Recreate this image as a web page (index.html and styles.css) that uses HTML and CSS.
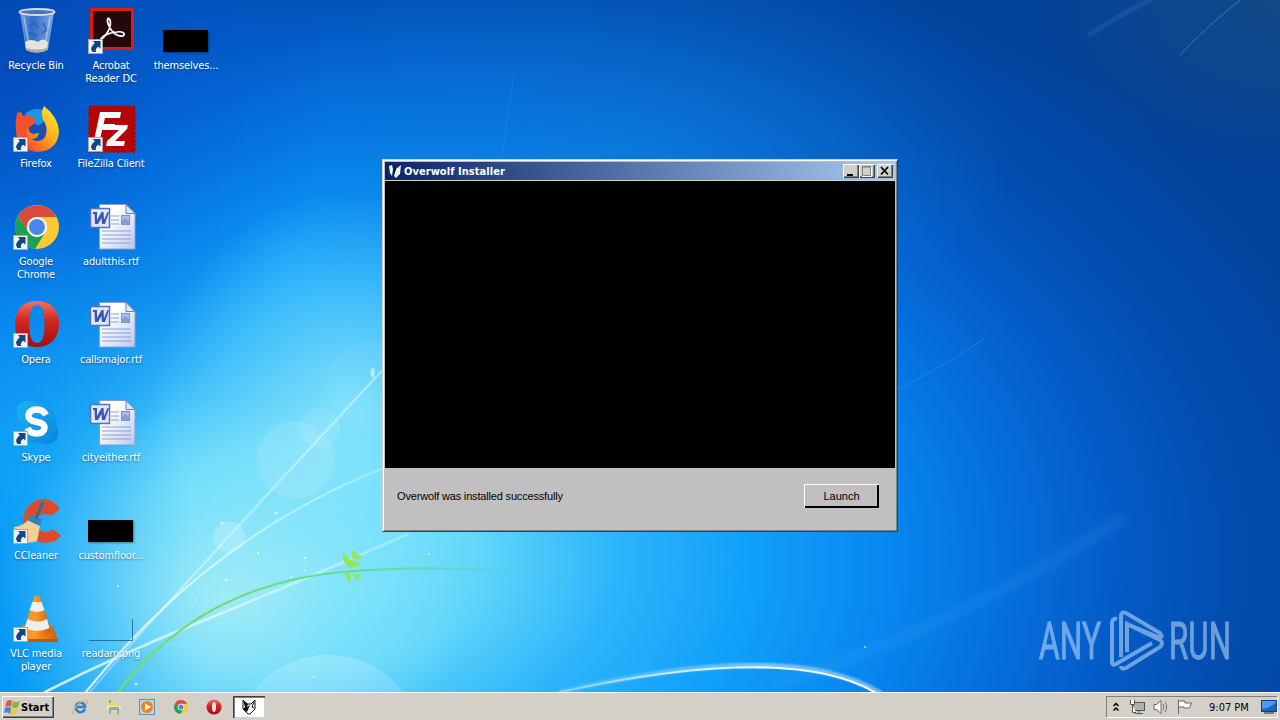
FILE: index.html
```html
<!DOCTYPE html>
<html lang="en">
<head>
  <meta charset="UTF-8">
  <title>Overwolf Installer</title>
  <link rel="stylesheet" href="styles.css">
</head>
<body>
  <div class="desktop">
    <svg class="wallpaper" viewBox="0 0 1280 692">
      <defs>
        <linearGradient id="fade" x1="0" x2="1"><stop offset="0" stop-color="#7bdc58"/><stop offset=".5" stop-color="#62dc9a"/><stop offset="1" stop-color="#50c8e8" stop-opacity="0"/></linearGradient>
        <linearGradient id="bubble" x1="0" y1="0" x2="0" y2="1"><stop offset="0" stop-color="#fff" stop-opacity=".2"/><stop offset=".6" stop-color="#fff" stop-opacity="0"/></linearGradient>
        <linearGradient id="beam" x1="0" x2="1"><stop offset="0" stop-color="#fff" stop-opacity=".8"/><stop offset="1" stop-color="#fff" stop-opacity=".25"/></linearGradient>
        <linearGradient id="arc" x1="0" x2="1"><stop offset="0" stop-color="#fff" stop-opacity=".3"/><stop offset=".65" stop-color="#fff"/><stop offset="1" stop-color="#fff"/></linearGradient>
        <filter id="soft"><feGaussianBlur stdDeviation="1"/></filter>
        <filter id="softer" x="-20%" y="-20%" width="140%" height="140%"><feGaussianBlur stdDeviation="5"/></filter>
      </defs>
      <circle cx="328" cy="750" r="95" fill="url(#bubble)"/>
      <circle cx="295" cy="460" r="39" fill="#fff" opacity=".11"/>
      <circle cx="320" cy="428" r="20" fill="#fff" opacity=".1"/>
      <circle cx="229" cy="537" r="16" fill="#fff" opacity=".2"/>
      <circle cx="370" cy="385" r="44" fill="#fff" opacity=".04"/>
      <g fill="none" stroke-linecap="round">
        <path d="M90 692Q190 575 382 371" stroke="#fff" stroke-opacity=".33" stroke-width="2"/>
        <path d="M84 692Q210 560 382 370" stroke="#fff" stroke-opacity=".2" stroke-width="1.5"/>
        <path d="M86 692Q212 535 384 468" stroke="url(#beam)" stroke-width="2"/>
        <path d="M45 692Q120 654 200 622T408 534" stroke="url(#beam)" stroke-width="2.6"/>
        <path d="M118 692Q200 585 342 572Q460 562 600 580" stroke="url(#fade)" stroke-width="2.2"/>
        <path d="M560 692Q790 638 880 693" stroke="url(#arc)" stroke-width="5" opacity=".45" filter="url(#soft)"/>
        <path d="M560 692Q790 642 876 693" stroke="url(#arc)" stroke-width="2"/>
        <path d="M780 683Q960 625 1120 520" stroke="#5ab8ff" stroke-opacity=".16" stroke-width="9" filter="url(#softer)"/>
        <path d="M897 390Q950 363 985 338" stroke="#65baff" stroke-opacity=".25"/>
        <path d="M502 155Q508 110 515 70" stroke="#7fcaff" stroke-opacity=".12"/>
        <path d="M1180 55Q1205 28 1240 0" stroke="#65baff" stroke-opacity=".25" stroke-width="1.500"/>
        <path d="M1090 34Q1120 15 1150 0" stroke="#65baff" stroke-opacity=".13" stroke-width="5" filter="url(#soft)"/>
      </g>
      <path d="M343 551Q342 564 350 568Q360 567 360 562Q352 564 343 551ZM351 548L352 558Q356 561 363 556Q356 556 351 548ZM344 571Q346 580 351 584L350 574ZM352 573L358 582L360 575Z" fill="#93e856"/>
      <path d="M371 369q3-3 4 2l-1 7q-5-2-3-9" fill="#fff" opacity=".5"/>
      <g fill="#fff" opacity=".65"><circle cx="276" cy="513" r="1.5"/><circle cx="222" cy="523" r="1.5"/><circle cx="258" cy="553" r="1.2"/><circle cx="226" cy="580" r="1.5"/><circle cx="305" cy="558" r="1.2"/><circle cx="305" cy="570" r="1"/><circle cx="196" cy="600" r="1"/><circle cx="291" cy="577" r="1"/><circle cx="136" cy="684" r="1.5"/><circle cx="314" cy="677" r="1"/><circle cx="429" cy="554" r="1"/><circle cx="118" cy="586" r="1"/><circle cx="865" cy="647" r="1"/></g>
    </svg>

    <!-- shared shapes -->
    <svg class="sprites">
      <defs>
        <linearGradient id="red" x1="0" y1="0" x2="0" y2="1"><stop offset="0" stop-color="#f07468"/><stop offset=".4" stop-color="#d32a20"/><stop offset="1" stop-color="#a30d0a"/></linearGradient>
        <linearGradient id="fire" x1="1" y1="0" x2=".1" y2="1"><stop offset="0" stop-color="#fff33a"/><stop offset=".45" stop-color="#ffb21e"/><stop offset=".75" stop-color="#ff6a22"/><stop offset="1" stop-color="#e8205a"/></linearGradient>
        <linearGradient id="page" x1="0" y1="0" x2="1" y2="1"><stop offset=".3" stop-color="#fff"/><stop offset="1" stop-color="#b9c8f2"/></linearGradient>
        <linearGradient id="cone" x1="0" x2="1"><stop offset="0" stop-color="#f08a1c"/><stop offset=".4" stop-color="#ff9a2c"/><stop offset="1" stop-color="#d35c04"/></linearGradient>
        <linearGradient id="glass" x1="0" x2="1"><stop offset="0" stop-color="#9db9e6" stop-opacity=".8"/><stop offset=".35" stop-color="#5f8fd8" stop-opacity=".5"/><stop offset="1" stop-color="#a9c3ee" stop-opacity=".8"/></linearGradient>
        <linearGradient id="sky" x1="0" y1="0" x2="1" y2="1"><stop offset="0" stop-color="#18b4f4"/><stop offset="1" stop-color="#0a84dc"/></linearGradient>
      </defs>
      <symbol id="shortcut" viewBox="0 0 15 15">
        <rect x=".5" y=".5" width="14" height="14" fill="#f2f2f2" stroke="#a8a8a8"/>
        <path d="M5 2H12.500V9.500L10.300 7.800Q7 9.500 8 13H4.500Q1 8.500 6.800 4.200Z" fill="#164585"/>
      </symbol>
      <symbol id="chrome" viewBox="0 0 44 44">
        <circle cx="22" cy="22" r="22" fill="#fbc934"/>
        <path d="M3 11A22 22 0 0 1 41.500 12H22A10 10 0 0 0 13 27Z" fill="#dc4a3c"/>
        <path d="M3 11A22 22 0 0 0 20 44L30.500 27A10 10 0 0 1 13.300 27Z" fill="#1d9f58"/>
        <circle cx="22" cy="22" r="10" fill="#fff"/><circle cx="22" cy="22" r="8" fill="#4a86ee"/>
      </symbol>
      <symbol id="opera" viewBox="0 0 44 46">
        <path fill-rule="evenodd" d="M22 0C36 0 44 9 44 23S35 46 22 46S0 37 0 23S8 0 22 0ZM22 4C16 4 14.500 12 14.500 23S16 42 22 42S29.500 34 29.500 23S28 4 22 4Z" fill="url(#red)"/>
      </symbol>
      <symbol id="word" viewBox="0 0 48 48">
        <path d="M11.500 1.500H38L47 10.500V46H11.500Z" fill="url(#page)" stroke="#8a9cc8"/>
        <path d="M38 1.500V10.500H47Z" fill="#dce8fa" stroke="#6b84b8"/>
        <path d="M23 13H31M23 17H31M23 21H31M14 28H43M14 32H43M14 36H43M14 40H43" stroke="#8ca0d2"/>
        <rect x="33.500" y="12.500" width="8" height="9" fill="#a8c0e8" stroke="#7d94c8"/><path d="M34 18l3-3 4 3v3h-7z" fill="#7ea0d6"/>
        <rect x="2.500" y="5.500" width="19" height="19" fill="#dfe7fa" stroke="#5570bc" stroke-width="1.500"/>
        <path d="M5 9H9V17L13.500 9H15.500L16 17L19.500 9H21L17 21H14L13.500 15L10 21H7L6.500 11H5Z" fill="#3c56b0"/>
      </symbol>
    </svg>

    <div class="icons">
      <div class="icon">
        <svg viewBox="0 0 48 48">
          <path d="M7 5L13 43Q24 47 35 43L41 5Z" fill="url(#glass)"/>
          <path d="M12 35L13 43Q24 48 34 43L35 35Q29 30 25 35Q18 31 12 35Z" fill="#e6e3dd"/>
          <path d="M13 43Q24 48 34 43L34 41Q24 44 13 41Z" fill="#b4aba0"/>
          <ellipse cx="24" cy="5" rx="17.500" ry="3" fill="#4a73ba" stroke="#d2dae6" stroke-width="1.800"/>
          <path d="M16 19L22 16L25 21M30 16L34 23L29 26M16 26L24 29" fill="none" stroke="#2a61b4" stroke-width="2.500" opacity=".65"/>
          <path d="M11 10L16 38M37 10L32 38" stroke="#d9e6fa" stroke-width="1.500" opacity=".5"/>
        </svg>
        <span>Recycle Bin</span>
      </div>
      <div class="icon">
        <svg viewBox="0 0 48 48">
          <rect x="2" y="1" width="44" height="42" fill="#e21b12"/><rect x="5" y="4" width="38" height="36" fill="#25080e"/>
          <path d="M11 34C19 29 24 19 22 13C20 9 18 13 21 19C24 26 30 30 35 29C38 27 35 24 29 25C20 26 15 28 11 34Z" fill="none" stroke="#fff" stroke-width="1.700"/>
        </svg>
        <svg class="arrow"><use href="#shortcut"/></svg>
        <span>Acrobat<br>Reader DC</span>
      </div>
      <div class="icon">
        <div class="thumb"></div>
        <span>themselves...</span>
      </div>

      <div class="icon">
        <svg viewBox="0 0 48 48">
          <circle cx="23" cy="21" r="17" fill="#1a4fb8"/><path d="M12 9Q21 1 31 6L34 14L25 21Z" fill="#1898e4"/>
          <path d="M31 1Q45 12 46 26Q45 46 24 47Q4 45 3 25Q2 14 8 7L10 12Q15 9 20 13L22 18L16 22Q14 27 20 29L26 28Q25 34 18 34Q27 39 32 32Q35 25 32 18Q26 9 31 1Z" fill="url(#fire)"/>
          <path d="M5 6L10 11Q15 9 21 12L22 18L16 22Q11 27 17 34Q8 34 3 25Q2 14 5 6Z" fill="#f2502e"/>
        </svg>
        <svg class="arrow"><use href="#shortcut"/></svg>
        <span>Firefox</span>
      </div>
      <div class="icon">
        <svg viewBox="0 0 48 48">
          <rect x="1" y="1" width="46" height="46" fill="#b40404" stroke="#9c1010" stroke-width="2" stroke-dasharray="2 2"/>
          <path d="M12 7H33L32 13H17L15.500 19H27L26 25H14L11 40H5Z" fill="#fff"/>
          <path d="M25 20H40L39 24L27 36H37L36 41H18L19 36L31 25H24Z" fill="#fff"/>
        </svg>
        <svg class="arrow"><use href="#shortcut"/></svg>
        <span>FileZilla Client</span>
      </div>
      <div class="icon"></div>

      <div class="icon">
        <svg viewBox="0 0 48 48"><use href="#chrome" x="2" y="2" width="44" height="44"/></svg>
        <svg class="arrow"><use href="#shortcut"/></svg>
        <span>Google<br>Chrome</span>
      </div>
      <div class="icon">
        <svg viewBox="0 0 48 48"><use href="#word" width="48" height="48"/></svg>
        <span>adultthis.rtf</span>
      </div>
      <div class="icon"></div>

      <div class="icon">
        <svg viewBox="0 0 48 48"><use href="#opera" x="2" y="0" width="44" height="46"/></svg>
        <svg class="arrow"><use href="#shortcut"/></svg>
        <span>Opera</span>
      </div>
      <div class="icon">
        <svg viewBox="0 0 48 48"><use href="#word" width="48" height="48"/></svg>
        <span>callsmajor.rtf</span>
      </div>
      <div class="icon"></div>

      <div class="icon">
        <svg viewBox="0 0 48 48">
          <path d="M15 2Q20 2 23 4Q43 4 43 25Q48 34 43 41Q37 47 28 44Q10 46 5 30Q4 24 5 19Q0 4 15 2Z" fill="url(#sky)"/>
          <path d="M33 16Q30 10.500 24 10.500Q15.500 11 15.500 17Q15.500 21.500 24 23Q32 24.500 31.500 29Q30.500 34.500 23.500 34.500Q17 34.500 14.500 29" fill="none" stroke="#fff" stroke-width="6.500"/>
        </svg>
        <svg class="arrow"><use href="#shortcut"/></svg>
        <span>Skype</span>
      </div>
      <div class="icon">
        <svg viewBox="0 0 48 48"><use href="#word" width="48" height="48"/></svg>
        <span>cityeither.rtf</span>
      </div>
      <div class="icon"></div>

      <div class="icon">
        <svg viewBox="0 0 48 48">
          <path d="M47 12L38 19Q32 15 26 19Q20 27 28 34Q35 37 40 32L48 39Q40 48 27 45Q11 40 10 25Q11 6 28 2Q40 1 47 12Z" fill="#e04a2c"/>
          <path d="M15 23L27 29L24 44Q12 48 4 42L1 30Q10 29 15 23Z" fill="#f6cf98"/>
          <path d="M17 18L29 22L27 29L14 23Z" fill="#2c86bc"/>
          <path d="M30 5L23 22" stroke="#1c74a8" stroke-width="3"/>
        </svg>
        <svg class="arrow"><use href="#shortcut"/></svg>
        <span>CCleaner</span>
      </div>
      <div class="icon">
        <div class="thumb"></div>
        <span>customfloor...</span>
      </div>
      <div class="icon"></div>

      <div class="icon">
        <svg viewBox="0 0 48 48">
          <path d="M9 31H40L45 46H4Z" fill="url(#cone)"/><path d="M4 44H45V47H4Z" fill="#c65402"/>
          <path d="M21 2Q24 -1 27 2L38 35Q36 42 24 42T11 35Z" fill="url(#cone)"/>
          <path d="M19.500 7H28.500L31.500 15Q24 19 16.500 15ZM14.500 24Q24 29 34 24L36.500 33Q24 39 11.500 33Z" fill="#eceef0"/>
        </svg>
        <svg class="arrow"><use href="#shortcut"/></svg>
        <span>VLC media<br>player</span>
      </div>
      <div class="icon">
        <div class="thumb empty"></div>
        <span>readam.png</span>
      </div>
    </div>

    <div class="window">
      <div class="titlebar">
        <svg class="wolf" viewBox="0 0 14 14">
          <path d="M1 2L4 1L5 5L4 12L2 9ZM13 1L8 5L6 12L8 14L12 10Z" fill="#f4f4f4"/><path d="M5 4L6 1L6 9L5 13L8 5Z" fill="#111"/>
        </svg>
        <span class="title">Overwolf Installer</span>
        <div class="btn"><svg viewBox="0 0 16 14"><path d="M4 10H10V12H4Z"/></svg></div>
        <div class="btn"><svg viewBox="0 0 16 14"><path d="M3.500 3H11.500V11.500H3.500Z" fill="none" stroke="#808080"/><path d="M3 2.500H12" stroke="#808080"/><path d="M3 12.500H12.500V3" fill="none" stroke="#fff"/></svg></div>
        <div class="btn close"><svg viewBox="0 0 16 14"><path d="M4 3L11 10.500M11 3L4 10.500" stroke="#000" stroke-width="1.800"/></svg></div>
      </div>
      <div class="screen"></div>
      <div class="footer">
        <span>Overwolf was installed successfully</span>
        <button>Launch</button>
      </div>
    </div>

    <svg class="watermark" viewBox="0 0 240 80">
      <text x="0" y="49" textLength="62" lengthAdjust="spacingAndGlyphs">ANY</text>
      <text x="130" y="49" textLength="62" lengthAdjust="spacingAndGlyphs">RUN</text>
      <path d="M78 9Q73 8 73 13V52Q73 56 77 54L113 33M82 47V6Q82 1 87 3L121 23Q125 28 119 27L88 14M82 56Q82 60 87 58L121 37Q125 33 121 30L88 14V42"/>
    </svg>
  </div>

  <div class="taskbar">
    <div class="start">
      <svg viewBox="0 0 16 16">
        <path d="M3 2Q6 0 8 2L7 8Q4 6 1 8Z" fill="#e8582c"/><path d="M9 2Q12 4 16 2L14 8Q10 10 8 8Z" fill="#7cbc3c"/>
        <path d="M1 9Q4 7 7 9L6 15Q3 12 0 14Z" fill="#3f86dc"/><path d="M8 9Q10 11 14 9L12 14Q9 17 6 15Z" fill="#f8c42c"/>
      </svg>
      <span>Start</span>
    </div>
    <div class="quick">
      <svg viewBox="0 0 16 16">
        <path d="M13 10Q11 14 7 13Q3 11 4 7Q6 3 10 4Q13 5 13 8H5" fill="none" stroke="#2385da" stroke-width="2.600"/>
        <path d="M3 15Q-1 15 3 9Q8 2 14 1Q17 2 14 6" fill="none" stroke="#e6b83c" stroke-width="1.200"/>
      </svg>
      <svg viewBox="0 0 16 16">
        <path d="M1 2H6L7 4H14V14H1Z" fill="#f0d478"/><path d="M3 1H5V4H3Z" fill="#74bc54"/><path d="M1 7H15V10H1Z" fill="#fae9a0"/>
        <path d="M3 15V9Q3 8 5 8H12Q13 8 13 9V15H11V11H5V15Z" fill="#62b6e8"/>
      </svg>
      <svg viewBox="0 0 16 16">
        <rect x=".5" y=".5" width="15" height="15" fill="#b4d6f4" stroke="#5c92cc"/><circle cx="8" cy="8" r="6" fill="#f48414"/><path d="M6 4.500L12 8L6 11.500Z" fill="#fff"/>
      </svg>
      <svg viewBox="0 0 16 16"><use href="#chrome" x="1" y="1" width="14" height="14"/></svg>
      <svg viewBox="0 0 16 16"><circle cx="8" cy="8" r="7.500" fill="url(#red)"/><ellipse cx="8" cy="8" rx="2" ry="5" fill="#f4e8e8"/></svg>
    </div>
    <div class="task">
      <svg viewBox="0 0 16 16">
        <path d="M2 1L6 5H10L14 1L14 10L9 15H7L2 10Z" fill="#fff" stroke="#111"/><path d="M2 1L7 5L6 8L9 6L6 13L2 10L4 8Z" fill="#111"/><path d="M13 3L11 8L13 9" fill="none" stroke="#111"/>
      </svg>
    </div>
    <div class="tray">
      <svg class="chevron" viewBox="0 0 8 10"><path d="M1.500 4L4 1.500L6.500 4M1.500 8.500L4 6L6.500 8.500" fill="none" stroke="#000" stroke-width="1.500"/></svg>
      <svg class="net" viewBox="0 0 16 16"><rect x="4.500" y="3.500" width="11" height="8" fill="#b0b0b0" stroke="#555"/><path d="M10 12V14M6 14.500H14" stroke="#555"/><path d="M1.500 1V5.500H5.500V1M3.500 5.500V13.500H7" fill="#fff" stroke="#555"/></svg>
      <svg class="sound" viewBox="0 0 16 16"><path d="M1 5.500H3.500L8 1.500V14.500L3.500 10.500H1Z" fill="#fff" stroke="#666"/><path d="M10 5Q12 8 10 11M12 3Q15.500 8 12 13" fill="none" stroke="#777"/></svg>
      <svg class="flag" viewBox="0 0 16 16"><path d="M1.500 1V15M2 2H8V4H14.500L12.500 9H7V8H2" fill="#fff" stroke="#666"/></svg>
      <span>9:07 PM</span>
      <svg class="show" viewBox="0 0 16 14"><rect x=".5" y=".5" width="15" height="11" fill="#1c62c8" stroke="#123f88"/><path d="M1 9Q8 9 15 2V1H1Z" fill="#4c9cea"/><path d="M3 13H13" stroke="#222"/></svg>
    </div>
  </div>
</body>
</html>
```
FILE: styles.css
```css
body {
  margin: 0;
  width: 1280px;
  height: 720px;
  overflow: hidden;
  display: flex;
  flex-direction: column;
  font-family: "DejaVu Sans Condensed", "DejaVu Sans", sans-serif;
  font-size: 11px;
}
.desktop {
  position: relative;
  height: 692px;
  background:
    radial-gradient(ellipse 240px 200px at 230px 600px, rgba(180,240,246,0.75) 0%, rgba(160,238,250,0.4) 45%, transparent 100%),
    radial-gradient(ellipse 200px 420px at 0px 640px, rgba(0,150,246,1) 0%, rgba(0,150,246,0.7) 35%, transparent 100%),
    radial-gradient(ellipse 200px 220px at 350px 410px, rgba(150,236,252,0.7) 0%, rgba(130,228,250,0.4) 50%, transparent 100%),
    radial-gradient(ellipse 330px 420px at 0px 60px, rgba(2,72,184,0.75) 0%, rgba(2,80,200,0.4) 50%, transparent 100%),
    radial-gradient(ellipse 400px 200px at 620px 150px, rgba(16,134,222,0.5) 0%, transparent 100%),
    radial-gradient(ellipse 260px 180px at 1280px 0px, rgba(22,74,128,0.8) 0%, transparent 100%),
    radial-gradient(ellipse 1100px 700px at 300px 560px, #70e0fb 0%, #60d6fa 16%, #2cb4fa 29%, #10a0fa 41%, #0888f0 53%, #0470de 64%, #045cc8 74%, #024eb0 84%, #02429a 100%);
}
.wallpaper {
  position: absolute;
  left: 0;
  top: 0;
  width: 1280px;
  height: 692px;
}
.sprites {
  position: absolute;
  width: 0;
  height: 0;
}
.icons {
  position: relative;
  display: grid;
  grid-template-columns: repeat(3, 75px);
  grid-auto-rows: 98px;
  width: 225px;
}
.icon {
  position: relative;
  padding-top: 7px;
}
.icon > svg {
  display: block;
  width: 48px;
  height: 48px;
  margin-left: 13px;
  overflow: visible;
}
.icon > .arrow {
  position: absolute;
  left: 0;
  top: 39px;
  width: 15px;
  height: 15px;
}
.icon span {
  display: block;
  width: 72px;
  margin-top: 4px;
  line-height: 13px;
  letter-spacing: -0.15px;
  text-align: center;
  white-space: nowrap;
  color: white;
  text-shadow: 0 1px 2px rgba(0,40,90,0.6);
}
.thumb {
  width: 45px;
  height: 22px;
  margin: 23px 0 7px 13px;
  background-color: black;
  box-shadow: 1px 1px 2px rgba(0,0,0,0.4);
}
.thumb.empty {
  width: 44px;
  background: none;
  box-shadow: 1px 1px 0 rgba(20,80,120,0.7);
}
.window {
  position: absolute;
  left: 382px;
  top: 159px;
  box-sizing: border-box;
  width: 516px;
  height: 373px;
  padding: 1px;
  border: 1px solid;
  border-color: #d4d0c8 #404040 #404040 #d4d0c8;
  background-color: #c0c0c0;
  box-shadow: inset 1px 1px white, inset -1px -1px #808080;
}
.titlebar {
  display: flex;
  align-items: center;
  height: 18px;
  margin: 1px 1px 0;
  padding-right: 2px;
  border-bottom: 1px solid #d4d0c8;
  background: linear-gradient(to right, #0a246a, #a6caf0);
}
.wolf {
  width: 14px;
  height: 14px;
  margin: 0 2px 0 3px;
}
.title {
  flex: 1;
  color: white;
  font-weight: bold;
  letter-spacing: 0.05px;
}
.btn {
  box-sizing: border-box;
  width: 16px;
  height: 14px;
  background-color: #d4d0c8;
  box-shadow: inset 1px 1px white, inset -1px -1px #404040, inset -2px -2px #808080;
}
.btn svg {
  display: block;
}
.close {
  margin-left: 2px;
}
.screen {
  height: 287px;
  margin: 0 1px;
  background-color: black;
}
.footer {
  display: flex;
  justify-content: space-between;
  align-items: center;
  height: 56px;
  padding: 0 17px 0 13px;
  font-family: "Liberation Sans", sans-serif;
  letter-spacing: -0.17px;
}
.footer button {
  width: 75px;
  height: 24px;
  padding: 0;
  border: none;
  background-color: #c0c0c0;
  box-shadow: inset 1px 1px white, inset -2px -2px black;
  font: inherit;
}
.watermark {
  position: absolute;
  left: 1039px;
  top: 610px;
  width: 240px;
  height: 80px;
  overflow: visible;
  opacity: 0.5;
}
.watermark text {
  font-family: Roboto, sans-serif;
  font-size: 52px;
  fill: #d8ecff;
  stroke: #d8ecff;
  stroke-width: 1;
}
.watermark path {
  fill: none;
  stroke: #d8ecff;
  stroke-width: 4;
}
.taskbar {
  box-sizing: border-box;
  display: flex;
  height: 28px;
  padding: 3px 2px 2px;
  border-top: 1px solid white;
  background-color: #d4d0c8;
}
.start {
  display: flex;
  align-items: center;
  width: 52px;
  height: 22px;
  font-weight: bold;
  box-shadow: inset 1px 1px white, inset -1px -1px #404040, inset -2px -2px #808080;
}
.start svg {
  width: 16px;
  height: 16px;
  margin: 0 1px 0 2px;
}
.quick {
  display: flex;
  align-items: center;
  gap: 17.5px;
  margin-left: 18px;
}
.quick svg {
  width: 16px;
  height: 16px;
}
.task {
  display: flex;
  align-items: center;
  justify-content: center;
  width: 32px;
  height: 22px;
  margin-left: 11px;
  background-color: white;
  box-shadow: inset 1px 1px #404040, inset 2px 2px #808080, inset -1px -1px #d4d0c8;
}
.task svg {
  width: 16px;
  height: 16px;
}
.tray {
  box-sizing: border-box;
  display: flex;
  align-items: center;
  width: 172px;
  height: 22px;
  margin-left: auto;
  padding-left: 5px;
  border: 1px solid;
  border-color: #808080 white white #808080;
}
.tray svg {
  width: 16px;
  height: 16px;
}
.tray .chevron {
  width: 8px;
  height: 10px;
}
.tray .net {
  margin-left: 9px;
}
.tray .sound, .tray .flag {
  margin-left: 8px;
}
.tray span {
  margin-left: 16px;
}
.tray .show {
  margin-left: auto;
}
```
